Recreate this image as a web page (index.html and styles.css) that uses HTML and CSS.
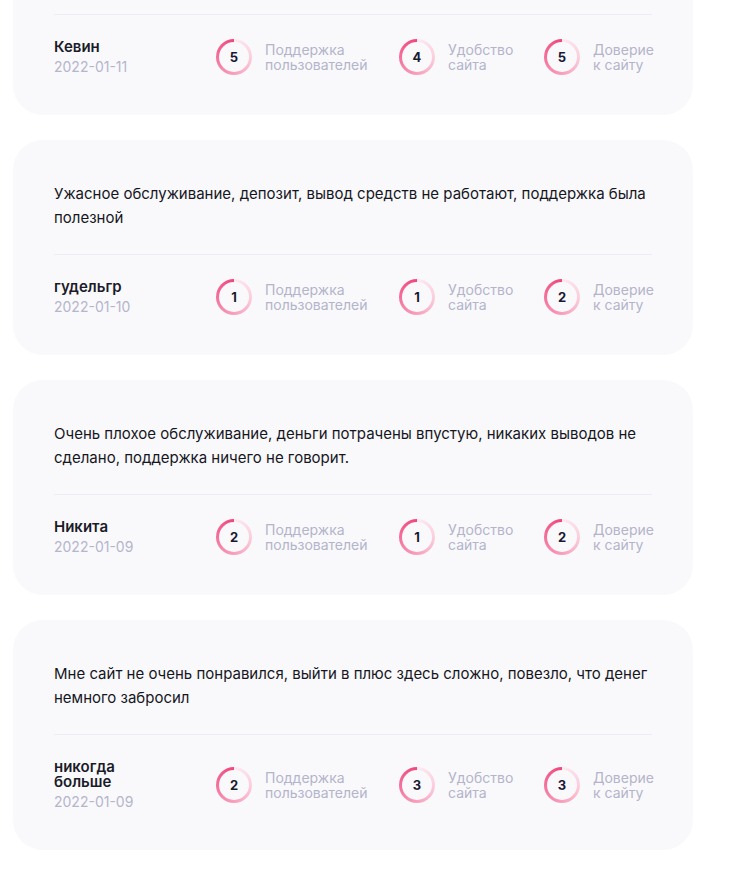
FILE: index.html
```html
<!DOCTYPE html>
<html lang="ru">
<head>
<meta charset="utf-8">
<title>Отзывы</title>
<link rel="stylesheet" href="styles.css">
</head>
<body>
<div class="list">
  <div class="card card--clipped">
    <div class="divider"></div>
    <div class="row">
      <div class="author"><div class="name">Кевин</div><div class="date">2022-01-11</div></div>
      <div class="rating"><div class="ring"><span class="num">5</span></div><div class="label">Поддержка<br>пользователей</div></div>
      <div class="rating"><div class="ring"><span class="num">4</span></div><div class="label">Удобство<br>сайта</div></div>
      <div class="rating"><div class="ring"><span class="num">5</span></div><div class="label">Доверие<br>к сайту</div></div>
    </div>
  </div>

  <div class="card">
    <p class="text">Ужасное обслуживание, депозит, вывод средств не работают, поддержка была<br>полезной</p>
    <div class="divider"></div>
    <div class="row">
      <div class="author"><div class="name">гудельгр</div><div class="date">2022-01-10</div></div>
      <div class="rating"><div class="ring"><span class="num">1</span></div><div class="label">Поддержка<br>пользователей</div></div>
      <div class="rating"><div class="ring"><span class="num">1</span></div><div class="label">Удобство<br>сайта</div></div>
      <div class="rating"><div class="ring"><span class="num">2</span></div><div class="label">Доверие<br>к сайту</div></div>
    </div>
  </div>

  <div class="card">
    <p class="text">Очень плохое обслуживание, деньги потрачены впустую, никаких выводов не сделано, поддержка ничего не говорит.</p>
    <div class="divider"></div>
    <div class="row">
      <div class="author"><div class="name">Никита</div><div class="date">2022-01-09</div></div>
      <div class="rating"><div class="ring"><span class="num">2</span></div><div class="label">Поддержка<br>пользователей</div></div>
      <div class="rating"><div class="ring"><span class="num">1</span></div><div class="label">Удобство<br>сайта</div></div>
      <div class="rating"><div class="ring"><span class="num">2</span></div><div class="label">Доверие<br>к сайту</div></div>
    </div>
  </div>

  <div class="card">
    <p class="text">Мне сайт не очень понравился, выйти в плюс здесь сложно, повезло, что денег немного забросил</p>
    <div class="divider"></div>
    <div class="row">
      <div class="author"><div class="name">никогда больше</div><div class="date">2022-01-09</div></div>
      <div class="rating"><div class="ring"><span class="num">2</span></div><div class="label">Поддержка<br>пользователей</div></div>
      <div class="rating"><div class="ring"><span class="num">3</span></div><div class="label">Удобство<br>сайта</div></div>
      <div class="rating"><div class="ring"><span class="num">3</span></div><div class="label">Доверие<br>к сайту</div></div>
    </div>
  </div>
</div>
</body>
</html>
```

FILE: styles.css
```css
* { box-sizing: border-box; }

body {
  margin: 0;
  background: #ffffff;
  font-family: Inter, "Noto Sans", sans-serif;
  color: #1b1b29;
}

.list {
  display: flex;
  flex-direction: column;
  gap: 25px;
  width: 680px;
  margin: -28px 0 0 13px;
}

.card {
  background: #f9f9fc;
  border-radius: 30px;
  padding: 42px 41px 40px;
}

.text {
  margin: 0 0 24px;
  font-size: 15px;
  line-height: 24px;
  color: #161622;
}

.divider {
  height: 1px;
  background: #ededf5;
}

.row {
  margin-top: 24px;
  display: grid;
  grid-template-columns: 162px 183px 145px 1fr;
  align-items: center;
}

.author {
  max-width: 110px;
}

.name {
  font-size: 15px;
  font-weight: 600;
  line-height: 15px;
  color: #1b1b29;
}

.date {
  margin-top: 5px;
  font-size: 14px;
  line-height: 16px;
  color: #b5b5cb;
}

.rating {
  display: flex;
  align-items: center;
  gap: 13px;
}

.ring {
  width: 36px;
  height: 36px;
  flex: none;
  border-radius: 50%;
  padding: 3px;
  background: conic-gradient(from 0deg, #fdebf1 0deg, #fbcfdd 90deg, #f8a0bc 180deg, #f4709a 270deg, #f0477b 360deg);
}

.num {
  display: flex;
  align-items: center;
  justify-content: center;
  width: 100%;
  height: 100%;
  border-radius: 50%;
  background: #f9f9fc;
  font-size: 13px;
  font-weight: 700;
  color: #1a1a33;
}

.label {
  font-size: 14px;
  line-height: 15px;
  color: #b4b4ca;
}
```
